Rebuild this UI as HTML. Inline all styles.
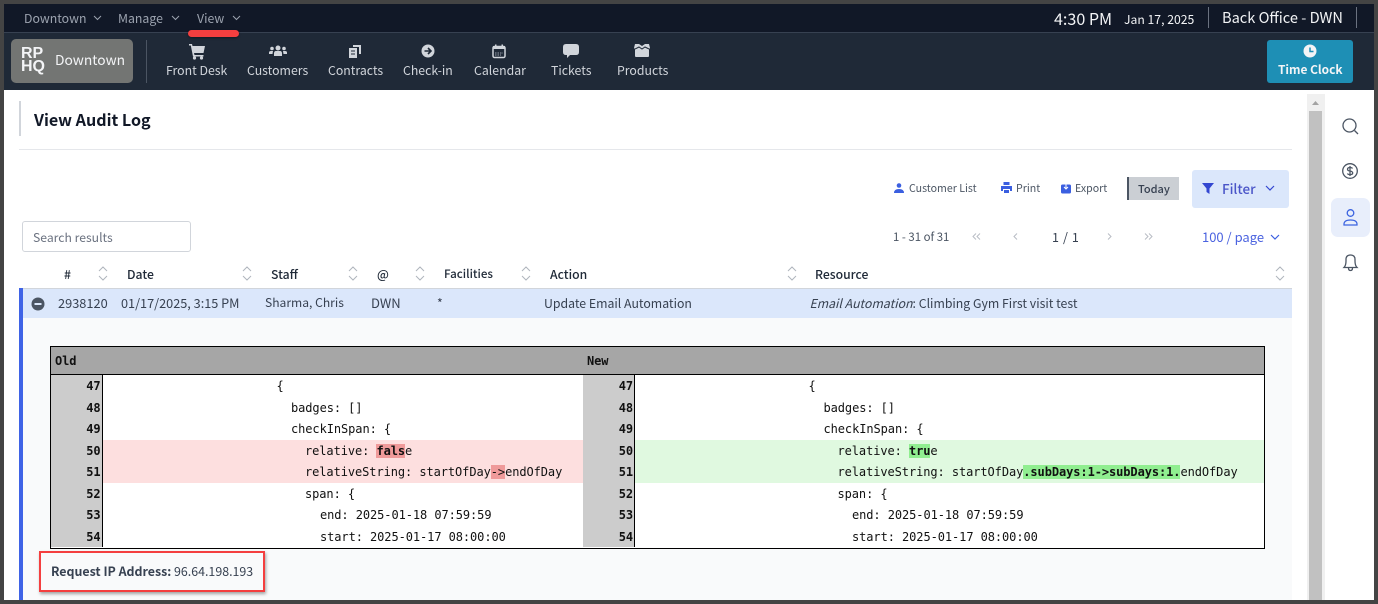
<!DOCTYPE html>
<html><head><meta charset="utf-8"><style>
html,body{margin:0;padding:0;background:#444;}
body{width:1378px;height:604px;position:relative;overflow:hidden;font-family:"Noto Sans CJK JP","Liberation Sans",sans-serif;}
.a,.t,.m{position:absolute;}
.t{white-space:nowrap;line-height:16px;font-size:12.3px;color:#374151;}
.m{white-space:pre;font-family:"DejaVu Sans Mono",monospace;font-size:12px;letter-spacing:-.08px;line-height:16px;color:#111;}
.b{font-weight:bold;}
.n{color:#d1d5db;font-size:12.3px;}
.h{color:#1f2937;font-weight:500;font-size:12.2px;}
.g{font-weight:bold;width:48px;text-align:right;}
svg{position:absolute;overflow:visible;}
i.r{background:#ef9a9a;font-style:normal;font-weight:bold;}
i.v{background:#90ee90;font-style:normal;font-weight:bold;}
</style></head><body>
<div class="a" style="left:4px;top:4px;width:1370px;height:596px;background:#fff"></div>
<div class="a" style="left:4px;top:4px;width:1370px;height:28px;background:#111827"></div>
<div class="a" style="left:4px;top:32px;width:1370px;height:1px;background:#374151"></div>
<div class="a" style="left:4px;top:33px;width:1370px;height:57px;background:#1f2937"></div>

<div class="t" style="left:24px;top:10px;color:#9ca3af">Downtown</div>
<svg style="left:93px;top:15px" width="10" height="6" fill="none" stroke="#9ca3af"><path d="M1 1l3.5 3.5L8 1"/></svg>
<div class="t" style="left:118px;top:10px;color:#9ca3af">Manage</div>
<svg style="left:171px;top:15px" width="10" height="6" fill="none" stroke="#9ca3af"><path d="M1 1l3.5 3.5L8 1"/></svg>
<div class="t" style="left:197px;top:10px;color:#9ca3af">View</div>
<svg style="left:232px;top:15px" width="10" height="6" fill="none" stroke="#9ca3af"><path d="M1 1l3.5 3.5L8 1"/></svg>
<div class="a" style="left:188px;top:30px;width:51px;height:7px;border-radius:4px;background:#f43f3f;box-shadow:0 1px 2px rgba(0,0,0,.4)"></div>

<div class="t" style="left:1054px;top:10px;color:#f3f4f6;font-size:16.1px">4:30 PM</div>
<div class="t" style="left:1124px;top:11px;color:#f3f4f6;font-size:12.2px">Jan 17, 2025</div>
<div class="a" style="left:1208px;top:7px;width:1px;height:21px;background:#6b7280"></div>
<div class="t" style="left:1222px;top:10px;color:#f3f4f6;font-size:14.6px">Back Office - DWN</div>
<div class="a" style="left:1356px;top:7px;width:1px;height:21px;background:#6b7280"></div>

<div class="a" style="left:11px;top:39px;width:122px;height:44px;border-radius:5px;background:#737573"></div>
<div class="t b" style="left:21px;top:47px;color:#f3f4f6;font-size:16px;line-height:13px;font-family:'Liberation Sans',sans-serif">RP<br>HQ</div>
<div class="t" style="left:55px;top:51px;color:#f3f4f6;font-size:13.8px">Downtown</div>
<div class="a" style="left:146px;top:40px;width:1px;height:43px;background:#4b5563"></div>

<svg style="left:188px;top:43px" width="18" height="17" fill="#d1d5db"><path d="M1 1h3l.5 2H17l-1.500 7H6l.5 2h9v1.500H5L2.800 2.500H1z"/><circle cx="6.500" cy="15" r="1.600"/><circle cx="13.500" cy="15" r="1.600"/></svg>
<div class="t n" style="left:166px;top:61.500px">Front Desk</div>
<svg style="left:269px;top:45px" width="18" height="12" fill="#d1d5db"><circle cx="9" cy="3" r="2.500"/><circle cx="3" cy="3.500" r="1.800"/><circle cx="15" cy="3.500" r="1.800"/><path d="M5 11V8.500Q5 6 7 6h4q2 0 2 2.500V11zM0 9V7.500Q0 6 2 6h2L3.500 9zM18 9V7.500Q18 6 16 6h-2l.5 3z"/></svg>
<div class="t n" style="left:247px;top:61.500px">Customers</div>
<svg style="left:348px;top:44px" width="14" height="14" fill="#d1d5db"><path d="M1 4h8v10H1z"/><path d="M5 1l8 0v9h-2V3H5z"/><path d="M3 7h4M3 10h4" stroke="#1f2937"/></svg>
<div class="t n" style="left:328px;top:61.500px">Contracts</div>
<svg style="left:421px;top:44px" width="14" height="14"><circle cx="7" cy="7" r="6.500" fill="#d1d5db"/><path d="M3.500 7h6M7 4l3 3-3 3" fill="none" stroke="#1f2937" stroke-width="1.600"/></svg>
<div class="t n" style="left:403px;top:61.500px">Check-in</div>
<svg style="left:492px;top:44px" width="14" height="14"><rect x="1" y="2.500" width="12" height="11" rx="1.500" fill="#1f2937" stroke="#d1d5db" stroke-width="1.500"/><path d="M1 2h12v3H1zM3 0.500h1.500V3H3zM9.500 0.500H11V3H9.500z" fill="#d1d5db"/><path d="M3 9h8M3 11h6" stroke="#9ca3af" stroke-dasharray="1.500 1"/></svg>
<div class="t n" style="left:474px;top:61.500px">Calendar</div>
<svg style="left:563px;top:44px" width="16" height="15" fill="#d1d5db"><path d="M3 0h10q3 0 3 3v5q0 3-3 3H7l-3 3v-3H3q-3 0-3-3V3q0-3 3-3z"/></svg>
<div class="t n" style="left:551px;top:61.500px">Tickets</div>
<svg style="left:634px;top:44px" width="16" height="13" fill="#d1d5db"><path d="M1 0h4l3 2 3-2h4l1 4-1 1v7q0 1-1 1H2q-1 0-1-1V5L0 4z"/><path d="M1 5l4-2 3 2 3-2 4 2" fill="none" stroke="#1f2937"/></svg>
<div class="t n" style="left:617px;top:61.500px">Products</div>

<div class="a" style="left:1267px;top:40px;width:86px;height:43px;border-radius:3px;background:#1e8fb5"></div>
<svg style="left:1303px;top:44px" width="14" height="14"><circle cx="7" cy="7" r="6.500" fill="#f3f4f6"/><path d="M7 3.500V7.500H10.500" fill="none" stroke="#1e8fb5" stroke-width="1.500"/></svg>
<div class="t b" style="left:1278px;top:61.500px;color:#f3f4f6;font-size:11.9px">Time Clock</div>

<div class="a" style="left:19px;top:101px;width:2px;height:35px;background:#d1d5db"></div>
<div class="t b" style="left:34px;top:110.500px;color:#111827;font-size:16.1px">View Audit Log</div>
<div class="a" style="left:19px;top:149px;width:1273px;height:1px;background:#e5e7eb"></div>

<svg style="left:894px;top:183px" width="10" height="11" fill="#3b5fe0"><circle cx="5" cy="2.500" r="2.300"/><path d="M0 10q0-4 5-4t5 4z"/></svg>
<div class="t" style="left:909px;top:181px;font-size:10.6px;color:#4b5563">Customer List</div>
<svg style="left:1001px;top:182px" width="11" height="12" fill="#3b5fe0"><path d="M2.500 0h6v3h-6zM0 4h11v5H9V7H2v2H0zM3 8h5v3H3z"/></svg>
<div class="t" style="left:1016px;top:181px;font-size:10.6px;color:#4b5563">Print</div>
<svg style="left:1061px;top:182px" width="10" height="12"><rect x="0" y="2.500" width="10" height="9" rx="1.500" fill="#3b5fe0"/><path d="M5 0v7M3 5l2 2 2-2" fill="none" stroke="#fff"/></svg>
<div class="t" style="left:1075px;top:181px;font-size:10.6px;color:#4b5563">Export</div>
<div class="a" style="left:1127px;top:177px;width:52px;height:23px;background:#cbcfd4"></div>
<div class="a" style="left:1127px;top:177px;width:2px;height:23px;background:#4b5563"></div>
<div class="t" style="left:1138px;top:181px;font-size:11px;font-weight:500;color:#374151">Today</div>
<div class="a" style="left:1192px;top:170px;width:97px;height:38px;border-radius:3px;background:#dbe7fb"></div>
<svg style="left:1202px;top:183px" width="13" height="12" fill="#3347d1"><path d="M0 0h12L7.500 5.500V11L4.500 9V5.500z"/></svg>
<div class="t" style="left:1222px;top:180px;font-size:13.4px;font-weight:500;color:#4a55c8">Filter</div>
<svg style="left:1265px;top:185px" width="10" height="7" fill="none" stroke="#3347d1" stroke-width="1.200"><path d="M1 1l4 4 4-4"/></svg>

<div class="a" style="left:22px;top:221px;width:167px;height:29px;border:1px solid #d1d5db;border-radius:3px;background:#fff"></div>
<div class="t" style="left:33px;top:229px;color:#6b7280;font-size:12.2px">Search results</div>

<div class="t" style="left:893px;top:229px;font-size:11.4px;color:#4b5563">1 - 31 of 31</div>
<svg style="left:972px;top:233px" width="10" height="8" fill="none" stroke="#b8bcc4"><path d="M4 .5L1 3.500 4 6.500M8 .5L5 3.500 8 6.500"/></svg>
<svg style="left:1013px;top:233px" width="6" height="8" fill="none" stroke="#b8bcc4"><path d="M4 .5L1 3.500 4 6.500"/></svg>
<div class="t" style="left:1052px;top:229px;font-size:12.5px;color:#374151;letter-spacing:.6px">1 / 1</div>
<svg style="left:1107px;top:233px" width="6" height="8" fill="none" stroke="#b8bcc4"><path d="M1 .5L4 3.500 1 6.500"/></svg>
<svg style="left:1144px;top:233px" width="10" height="8" fill="none" stroke="#b8bcc4"><path d="M1 .5L4 3.500 1 6.500M5 .5L8 3.500 5 6.500"/></svg>
<div class="t" style="left:1202px;top:229px;font-size:13px;color:#4b63e0">100 / page</div>
<svg style="left:1270px;top:234px" width="10" height="7" fill="none" stroke="#3b5fe0" stroke-width="1.200"><path d="M1 1l4 4 4-4"/></svg>

<div class="t h" style="left:64px;top:266px">#</div>
<div class="t h" style="left:127px;top:266px">Date</div>
<div class="t h" style="left:271px;top:266px">Staff</div>
<div class="t h" style="left:377px;top:266px">@</div>
<div class="t h" style="left:444px;top:266px;font-size:11.6px">Facilities</div>
<div class="t h" style="left:550px;top:266px">Action</div>
<div class="t h" style="left:815px;top:266px">Resource</div>
<svg style="left:0;top:0" width="1378" height="604" fill="none" stroke="#b0b5bd" stroke-width="1">
<path d="M99 271l4-4 4 4M99 276l4 4 4-4M243 271l4-4 4 4M243 276l4 4 4-4M349 271l4-4 4 4M349 276l4 4 4-4M416 271l4-4 4 4M416 276l4 4 4-4M522 271l4-4 4 4M522 276l4 4 4-4M788 271l4-4 4 4M788 276l4 4 4-4M1276 271l4-4 4 4M1276 276l4 4 4-4"/>
</svg>
<div class="a" style="left:19px;top:288px;width:1273px;height:1px;background:#d1d5db"></div>
<div class="a" style="left:19px;top:289px;width:1273px;height:311px;background:#f9fafb"></div>
<div class="a" style="left:23px;top:289px;width:1269px;height:29px;background:#dbe7fb"></div>
<div class="a" style="left:19px;top:288px;width:4px;height:312px;background:#3f63e6"></div>
<svg style="left:31px;top:297px" width="14" height="14"><circle cx="7" cy="7" r="6.500" fill="#4b5563"/><path d="M3.500 7h7" stroke="#dbe7fb" stroke-width="2"/></svg>
<div class="t" style="left:58px;top:295px;font-size:12.8px">2938120</div>
<div class="t" style="left:121px;top:295px;font-size:12.7px">01/17/2025, 3:15 PM</div>
<div class="t" style="left:265px;top:295px;font-size:12.1px">Sharma, Chris</div>
<div class="t" style="left:371px;top:295px;font-size:13px">DWN</div>
<div class="t" style="left:437px;top:295px">*</div>
<div class="t" style="left:544px;top:295px">Update Email Automation</div>
<div class="t" style="left:809.500px;top:295px"><em>Email Automation</em>: Climbing Gym First visit test</div>

<div class="a" style="left:50px;top:346px;width:1213px;height:201px;border:1px solid #000;background:#fff"></div>
<div class="a" style="left:51px;top:347px;width:1213px;height:27px;background:#a6a6a6"></div>
<div class="a" style="left:51px;top:374px;width:1213px;height:1px;background:#000"></div>
<div class="a" style="left:51px;top:375px;width:51px;height:172px;background:#ccc"></div>
<div class="a" style="left:102px;top:375px;width:1px;height:172px;background:#000"></div>
<div class="a" style="left:583px;top:375px;width:51px;height:172px;background:#ccc"></div>
<div class="a" style="left:634px;top:375px;width:1px;height:172px;background:#000"></div>
<div class="a" style="left:103px;top:440px;width:480px;height:43px;background:#fddfdf"></div>
<div class="a" style="left:635px;top:440px;width:629px;height:43px;background:#e0f9e0"></div>

<div class="m b" style="left:55px;top:353px">Old</div>
<div class="m b" style="left:587px;top:353px">New</div>

<div class="m g" style="left:52.500px;top:378px">47</div>
<div class="m g" style="left:52.500px;top:400px">48</div>
<div class="m g" style="left:52.500px;top:421px">49</div>
<div class="m g" style="left:52.500px;top:443px">50</div>
<div class="m g" style="left:52.500px;top:464px">51</div>
<div class="m g" style="left:52.500px;top:486px">52</div>
<div class="m g" style="left:52.500px;top:507px">53</div>
<div class="m g" style="left:52.500px;top:529px">54</div>
<div class="m g" style="left:585px;top:378px">47</div>
<div class="m g" style="left:585px;top:400px">48</div>
<div class="m g" style="left:585px;top:421px">49</div>
<div class="m g" style="left:585px;top:443px">50</div>
<div class="m g" style="left:585px;top:464px">51</div>
<div class="m g" style="left:585px;top:486px">52</div>
<div class="m g" style="left:585px;top:507px">53</div>
<div class="m g" style="left:585px;top:529px">54</div>

<div class="m" style="left:276.500px;top:378px">{</div>
<div class="m" style="left:291px;top:400px">badges: []</div>
<div class="m" style="left:291px;top:421px">checkInSpan: {</div>
<div class="m" style="left:305px;top:443px">relative: <i class="r">fals</i>e</div>
<div class="m" style="left:305px;top:464px">relativeString: startOfDay<i class="r" style="font-weight:normal">-&gt;</i>endOfDay</div>
<div class="m" style="left:305px;top:486px">span: {</div>
<div class="m" style="left:320px;top:507px">end: 2025-01-18 07:59:59</div>
<div class="m" style="left:320px;top:529px">start: 2025-01-17 08:00:00</div>

<div class="m" style="left:808.500px;top:378px">{</div>
<div class="m" style="left:823.500px;top:400px">badges: []</div>
<div class="m" style="left:823.500px;top:421px">checkInSpan: {</div>
<div class="m" style="left:837.500px;top:443px">relative: <i class="v">tru</i>e</div>
<div class="m" style="left:837.500px;top:464px">relativeString: startOfDay<i class="v">.subDays:1-&gt;subDays:1.</i>endOfDay</div>
<div class="m" style="left:837.500px;top:486px">span: {</div>
<div class="m" style="left:852px;top:507px">end: 2025-01-18 07:59:59</div>
<div class="m" style="left:852px;top:529px">start: 2025-01-17 08:00:00</div>

<div class="a" style="left:39px;top:551px;width:222px;height:37px;border:2px solid #f43f3f;box-shadow:1px 2px 3px rgba(0,0,0,.35)"></div>
<div class="t" style="left:51px;top:563px;font-size:12.4px"><b>Request IP Address:</b> 96.64.198.193</div>

<div class="a" style="left:1307px;top:94px;width:18px;height:506px;background:#f0f0f0"></div>
<div class="a" style="left:1309px;top:111px;width:13px;height:489px;background:#c1c1c1"></div>
<svg style="left:1312px;top:101px" width="8" height="5" fill="#a3a3a3"><path d="M0 4L3.500 0 7 4z"/></svg>

<svg style="left:1342px;top:118px" width="18" height="18" fill="none" stroke="#4b5563" stroke-width="1.300"><circle cx="7.500" cy="7.500" r="6.500"/><path d="M12.500 12.500l3.500 3.500"/></svg>
<svg style="left:1342px;top:163px" width="18" height="18" fill="none" stroke="#4b5563" stroke-width="1.300"><circle cx="8" cy="8" r="7.300"/><path d="M10.500 5.500Q10 4.500 8 4.500 5.500 4.500 5.500 6.200 5.500 7.600 8 8 10.700 8.500 10.700 10 10.700 11.600 8 11.600 6 11.600 5.400 10.500M8 3v10"/></svg>
<div class="a" style="left:1331px;top:198px;width:39px;height:39px;border-radius:7px;background:#e8eefb"></div>
<svg style="left:1343px;top:209px" width="16" height="18" fill="none" stroke="#3b63e0" stroke-width="1.300"><circle cx="7.500" cy="4" r="3.300"/><path d="M1 16q-.5-5 6.500-5t6.500 5z"/></svg>
<svg style="left:1343px;top:254px" width="16" height="18" fill="none" stroke="#4b5563" stroke-width="1.300"><path d="M1 13.500Q3 11.500 3 7V5.500Q3 1 7.500 1T12 5.500V7q0 4.500 2 6.500zM5.500 14q0 2.500 2 2.500t2-2.500"/></svg>
</body></html>
